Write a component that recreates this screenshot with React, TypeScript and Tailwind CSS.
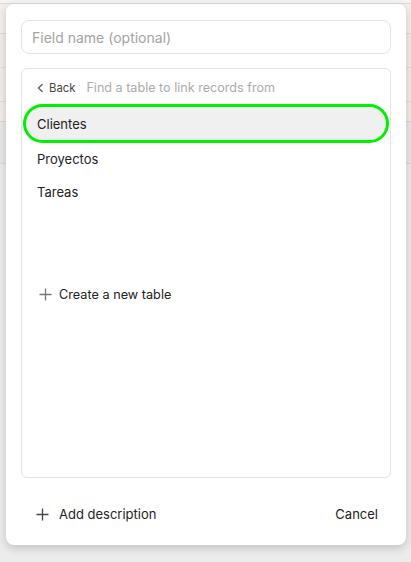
import React from 'react';

const tables = ['Clientes', 'Proyectos', 'Tareas'];

function PlusIcon({ className = '' }: { className?: string }) {
  return (
    <svg className={className} width="13" height="13" viewBox="0 0 13 13" fill="none">
      <path d="M6.5 0.5v12M0.5 6.5h12" stroke="currentColor" strokeWidth="1.3" />
    </svg>
  );
}

function App() {
  return (
    <div className="relative h-[562px] w-[411px] overflow-hidden bg-[#ececec] font-['Inter',sans-serif]">
      {/* faded spreadsheet behind the dialog */}
      <div className="flex flex-col">
        <div className="h-[3px] bg-[#f7f3f1]" />
        <div className="flex h-[30px] border-t border-[#dcdcdc] bg-[#f5efec]">
          <div className="w-[185px] border-r border-[#dcdcdc]" />
          <div className="w-[93px] border-r border-[#dcdcdc]" />
        </div>
        <div className="h-[34px] border-t border-[#e0dcda] bg-[#f3ece9]" />
        <div className="h-[34px] border-t border-[#e0dcda] bg-[#f3ece9]" />
        <div className="h-[20px] border-t border-[#e0dcda] bg-[#f3ece9]" />
        <div className="h-[42px] border-t border-[#d8d8d8] bg-[#e8e8e8]" />
        <div className="flex-1 border-t border-[#d8d8d8] bg-[#e6e6e6]" />
      </div>

      <div className="absolute left-[6px] top-[4px] flex h-[541px] w-[400px] flex-col rounded-[8px] bg-white px-[15px] pt-[16px] shadow-[0_3px_10px_rgba(0,0,0,0.18)]">
        <input
          placeholder="Field name (optional)"
          className="h-[34px] w-full rounded-[8px] border border-[#e3e3e3] px-[10px] text-[14px] text-[#333] outline-none placeholder:text-[#a3a3a3]"
        />

        <div className="mt-[14px] flex h-[410px] flex-col rounded-[6px] border border-[#e3e3e3] px-[1px]">
          <div className="flex h-[35px] items-center pl-[14px] pt-[3px]">
            <button className="flex items-center gap-[5px] text-[11.3px] text-[#444]">
              <svg width="7" height="10" viewBox="0 0 7 10" fill="none">
                <path d="M5.5 1L1.5 5l4 4" stroke="#555" strokeWidth="1.2" />
              </svg>
              Back
            </button>
            <span className="ml-[11px] text-[12.6px] text-[#ababab]">Find a table to link records from</span>
          </div>

          <div className="flex flex-col">
            {tables.map((name, i) => (
              <div
                key={name}
                className={
                  i === 0
                    ? 'flex h-[39px] items-center rounded-full border-[3px] border-[#00f000] bg-[#f0f0f0] pl-[11px] pt-[2px] text-[13px] text-[#222]'
                    : 'flex h-[33px] items-center pl-[14px] text-[13px] text-[#222]'
                }
              >
                {name}
              </div>
            ))}
          </div>

          <div className="mt-[76px] flex items-center gap-[7px] pl-[16px] text-[12.7px] text-[#222]">
            <PlusIcon className="text-[#777]" />
            Create a new table
          </div>
        </div>

        <div className="mt-[27px] flex items-center justify-between pl-[15px] pr-[13px] text-[13px] text-[#222]">
          <div className="flex items-center gap-[10px]">
            <PlusIcon className="text-[#444]" />
            Add description
          </div>
          <span>Cancel</span>
        </div>
      </div>
    </div>
  );
}

export default App;
